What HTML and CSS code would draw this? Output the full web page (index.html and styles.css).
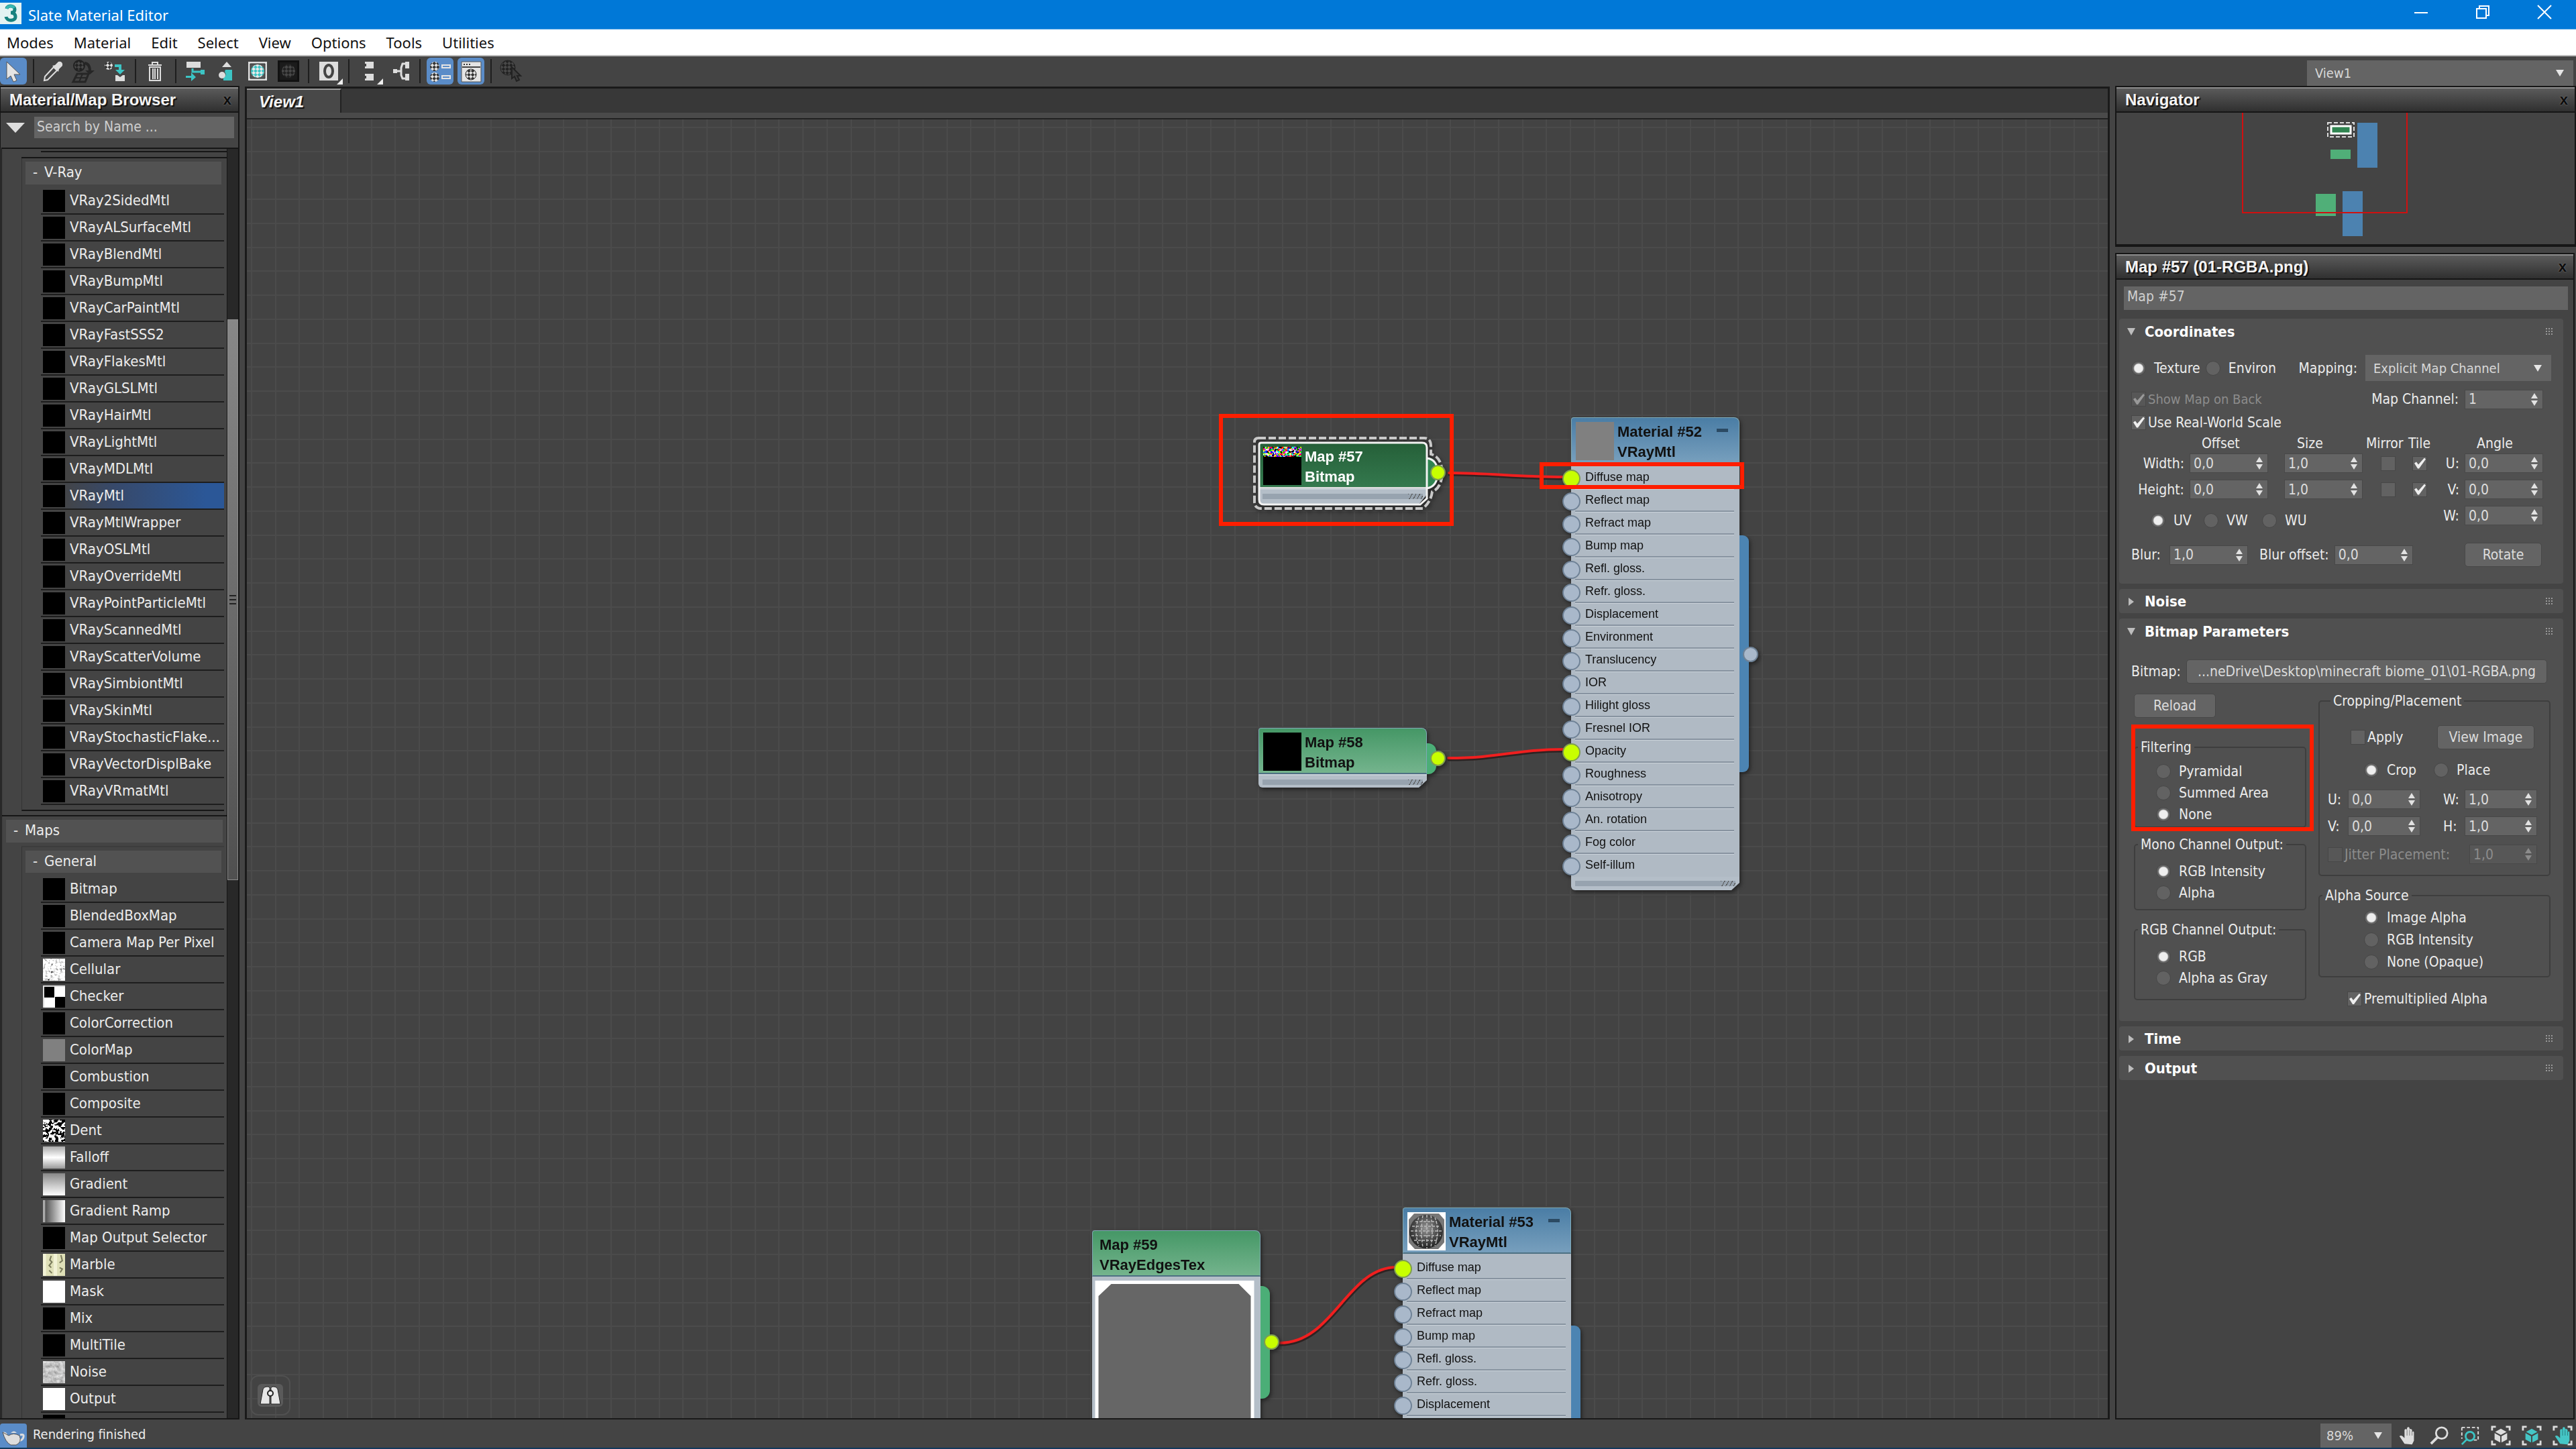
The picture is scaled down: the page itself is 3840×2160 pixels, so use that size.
FILE: index.html
```html
<!DOCTYPE html>
<html lang="en">
<head>
<meta charset="utf-8">
<title>Slate Material Editor</title>
<link rel="stylesheet" href="styles.css">
</head>
<body>
<svg class="defs" aria-hidden="true">
  <defs>
    <pattern id="chk" width="8" height="8" patternUnits="userSpaceOnUse" patternTransform="rotate(45)"><rect width="8" height="8" fill="#e0e0e0"/><rect width="4" height="4" fill="#333"/><rect x="4" y="4" width="4" height="4" fill="#333"/></pattern>
    <pattern id="chk-teal" width="8" height="8" patternUnits="userSpaceOnUse" patternTransform="rotate(45)"><rect width="8" height="8" fill="#e8e8e8"/><rect width="4" height="4" fill="#3cc4c4"/><rect x="4" y="4" width="4" height="4" fill="#3cc4c4"/></pattern>
    <pattern id="chk-dark" width="8" height="8" patternUnits="userSpaceOnUse" patternTransform="rotate(45)"><rect width="8" height="8" fill="#222"/><rect width="4" height="4" fill="#484848"/><rect x="4" y="4" width="4" height="4" fill="#484848"/></pattern>
    <filter id="n-cell" x="0" y="0" width="1" height="1"><feTurbulence type="fractalNoise" baseFrequency=".28" numOctaves="2" seed="3"/><feColorMatrix values="3 0 0 0 -.5 3 0 0 0 -.5 3 0 0 0 -.5 0 0 0 0 1"/></filter>
    <filter id="n-dent" x="0" y="0" width="1" height="1"><feTurbulence type="fractalNoise" baseFrequency=".22" numOctaves="2" seed="8"/><feColorMatrix values="14 0 0 0 -6.6 14 0 0 0 -6.6 14 0 0 0 -6.6 0 0 0 0 1"/></filter>
    <filter id="n-noise" x="0" y="0" width="1" height="1"><feTurbulence type="fractalNoise" baseFrequency=".2" numOctaves="3" seed="5"/><feColorMatrix values=".7 0 0 0 .2 .7 0 0 0 .2 .7 0 0 0 .2 0 0 0 0 1"/></filter>
    <filter id="n-rgb" x="0" y="0" width="1" height="1"><feTurbulence type="fractalNoise" baseFrequency=".3" numOctaves="2" seed="2"/><feColorMatrix values="7 0 0 0 -3.1 0 7 0 0 -3.2 0 0 7 0 -3.2 0 0 0 0 1"/></filter>
    <radialGradient id="ball" cx=".5" cy=".4" r=".6"><stop offset="0" stop-color="#999"/><stop offset=".6" stop-color="#4a4a4a"/><stop offset="1" stop-color="#222"/></radialGradient>
  </defs>
</svg>

<header class="titlebar">
  <svg class="app-icon" viewBox="0 0 32 32"><rect width="32" height="32" fill="#e4f3f2"/><path d="M10 9c1-6 12-5 12 1 0 4-3 5-6 5 4 0 7 2 7 6 0 7-13 7-14 0" fill="none" stroke="#17827f" stroke-width="5"/><path d="M10 9c1-5 9-5 11-1" fill="none" stroke="#38b8b2" stroke-width="4"/></svg>
  <h1>Slate Material Editor</h1>
  <div class="win-buttons">
    <button aria-label="Minimize"><svg viewBox="0 0 22 22"><path d="M1 12h20" stroke="#fff" stroke-width="2"/></svg></button>
    <button aria-label="Restore"><svg viewBox="0 0 22 22"><path d="M2 6h14v14H2zM6 6V2h14v14h-4" fill="none" stroke="#fff" stroke-width="2"/></svg></button>
    <button aria-label="Close"><svg viewBox="0 0 22 22"><path d="M1 1l20 20M21 1L1 21" stroke="#fff" stroke-width="2"/></svg></button>
  </div>
</header>

<nav class="menubar">
  <button>Modes</button><button>Material</button><button>Edit</button><button>Select</button><button>View</button><button>Options</button><button>Tools</button><button>Utilities</button>
</nav>

<div class="toolbar">
  <button class="tool on" aria-label="Select"><svg viewBox="0 0 40 40"><path d="M10 6v26l6-5 4 9 5-2-4-9h9z" fill="#e4e4e4" stroke="#555"/></svg></button>
  <i class="sep"></i>
  <button class="tool" aria-label="Pick material"><svg viewBox="0 0 40 40"><path d="M6 34l1-6L20 14l5 5-14 14z" fill="none" stroke="#ddd" stroke-width="2"/><path d="M18 12l4-1 5-5q3-1 5 1t1 5l-5 5-1 4z" fill="#ddd"/></svg></button>
  <button class="tool" aria-label="Put to scene"><svg viewBox="0 0 40 40"><circle cx="12" cy="12" r="8" fill="url(#chk-dark)" stroke="#222" stroke-width="2"/><path d="M20 8q8 1 8 12" fill="none" stroke="#262626" stroke-width="4"/><path d="M21 19h14l-7 6z" fill="#262626"/><path d="M9 24h17l-5 12H3z" fill="none" stroke="#262626" stroke-width="3"/><path d="M6 30h17M17 24l-5 12" stroke="#262626" stroke-width="2"/></svg></button>
  <button class="tool" aria-label="Assign material"><svg viewBox="0 0 40 40"><circle cx="10" cy="12" r="6" fill="url(#chk)"/><path d="M19 12h8v8" fill="none" stroke="#3cc4c4" stroke-width="4"/><path d="M20 18h14l-7 7z" fill="#3cc4c4"/><path d="M20 26h3l4 3 4-3h3v9H20z" fill="#ddd"/></svg></button>
  <i class="sep"></i>
  <button class="tool" aria-label="Delete"><svg viewBox="0 0 40 40"><path d="M9 11h20M15 10V7h8v3M11 14h16v20H11zM16 16v16M19 16v16M23 16v16" fill="none" stroke="#ddd" stroke-width="2"/></svg></button>
  <i class="sep"></i>
  <button class="tool" aria-label="Move children"><svg viewBox="0 0 40 40"><path d="M6 6h21v9H6z" fill="#ddd"/><path d="M15 16v5h12" fill="none" stroke="#3cc4c4" stroke-width="3"/><path d="M27 18h6v7h-6zM5 27h8v-5l7 7-7 6v-5H5z" fill="#3cc4c4"/></svg></button>
  <button class="tool" aria-label="Hide unused slots"><svg viewBox="0 0 40 40"><path d="M20 6l7 8H13z" fill="#ddd"/><path d="M18 18h10v16H15v-4q6-3 2-9z" fill="#3cc4c4"/><circle cx="13" cy="26" r="5" fill="#ddd"/></svg></button>
  <button class="tool" aria-label="Show in viewport"><svg viewBox="0 0 40 40"><path d="M6 6h28v28H6z" fill="#ddd"/><path d="M9 9h22v22H9z" fill="#555" stroke="#333"/><circle cx="20" cy="20" r="10" fill="url(#chk-teal)"/></svg></button>
  <button class="tool" aria-label="Show background"><svg viewBox="0 0 40 40"><path d="M4 4h32v32H4z" fill="#111"/><path d="M7 7h26v26H7z" fill="#1b1b1b"/><circle cx="20" cy="20" r="10" fill="url(#chk-dark)"/></svg></button>
  <i class="sep"></i>
  <button class="tool" aria-label="Material ID channel"><svg viewBox="0 0 40 40"><path d="M6 6h28v28H6z" fill="#ddd"/><ellipse cx="20" cy="20" rx="6" ry="9" fill="none" stroke="#444" stroke-width="4"/><path d="M41 31v9h-9z" fill="#eee"/></svg></button>
  <i class="sep"></i>
  <button class="tool" aria-label="Lay out all"><svg viewBox="0 0 40 40"><path d="M14 6h13v10H14v-3h2V9h-2zM14 24h13v10H14v-3h2v-4h-2z" fill="#ddd"/><path d="M41 31v9h-9z" fill="#eee"/></svg></button>
  <button class="tool" aria-label="Lay out children"><svg viewBox="0 0 40 40"><path d="M10 17h6v6h-6zM28 6h6v10h-6zM28 24h6v10h-6z" fill="#ddd"/><path d="M16 20h5M29 9h-5l-2 6v11l2 5h5" fill="none" stroke="#ddd" stroke-width="3"/></svg></button>
  <i class="sep"></i>
  <button class="tool on" aria-label="Material/Map Browser"><svg viewBox="0 0 40 40"><circle cx="12" cy="13" r="7" fill="url(#chk)"/><circle cx="12" cy="29" r="7" fill="url(#chk)"/><path d="M23 11h12v4H23zM23 27h12v4H23z" fill="none" stroke="#e4e4e4" stroke-width="2"/></svg></button>
  <button class="tool on" aria-label="Parameter Editor"><svg viewBox="0 0 40 40"><path d="M6 6h29v30H6z" fill="#e4e4e4" stroke="#555"/><path d="M7 14h27" stroke="#444" stroke-width="2"/><path d="M9 10h2M13 10h2M17 10h2" stroke="#333" stroke-width="2"/><circle cx="20" cy="25" r="8" fill="url(#chk)" stroke="#333"/></svg></button>
  <i class="sep"></i>
  <button class="tool" aria-label="Select by material"><svg viewBox="0 0 40 40"><circle cx="15" cy="15" r="11" fill="url(#chk-dark)" stroke="#222"/><path d="M21 14v17l4-3 3 7 4-2-3-6h5z" fill="#3d3d3d" stroke="#222" stroke-width="2"/></svg></button>
  <label class="combo view-combo"><select aria-label="View"><option>View1</option></select></label>
</div>

<main class="workspace">
  <aside class="panel browser">
    <div class="panel-head"><h2>Material/Map Browser</h2><button class="close" aria-label="Close browser">x</button></div>
    <div class="search"><i class="tri-down"></i><input type="text" aria-label="Search by name" value="Search by Name ..."></div>
    <div class="tree">
      <div class="tree-body">
        <div class="tail"></div>
        <section class="group">
          <h3><span>-</span>V-Ray</h3>
          <ul>
            <li><i></i>VRay2SidedMtl</li>
            <li><i></i>VRayALSurfaceMtl</li>
            <li><i></i>VRayBlendMtl</li>
            <li><i></i>VRayBumpMtl</li>
            <li><i></i>VRayCarPaintMtl</li>
            <li><i></i>VRayFastSSS2</li>
            <li><i></i>VRayFlakesMtl</li>
            <li><i></i>VRayGLSLMtl</li>
            <li><i></i>VRayHairMtl</li>
            <li><i></i>VRayLightMtl</li>
            <li><i></i>VRayMDLMtl</li>
            <li class="selected"><i></i>VRayMtl</li>
            <li><i></i>VRayMtlWrapper</li>
            <li><i></i>VRayOSLMtl</li>
            <li><i></i>VRayOverrideMtl</li>
            <li><i></i>VRayPointParticleMtl</li>
            <li><i></i>VRayScannedMtl</li>
            <li><i></i>VRayScatterVolume</li>
            <li><i></i>VRaySimbiontMtl</li>
            <li><i></i>VRaySkinMtl</li>
            <li><i></i>VRayStochasticFlake...</li>
            <li><i></i>VRayVectorDisplBake</li>
            <li><i></i>VRayVRmatMtl</li>
          </ul>
        </section>
        <section class="maps">
          <h3><span>-</span>Maps</h3>
          <section class="group">
            <h3><span>-</span>General</h3>
            <ul>
              <li><i></i>Bitmap</li>
              <li><i></i>BlendedBoxMap</li>
              <li><i></i>Camera Map Per Pixel</li>
              <li><svg viewBox="0 0 32 32"><rect width="32" height="32" filter="url(#n-cell)"/></svg>Cellular</li>
              <li><i class="t-checker"></i>Checker</li>
              <li><i></i>ColorCorrection</li>
              <li><i class="t-gray"></i>ColorMap</li>
              <li><i></i>Combustion</li>
              <li><i></i>Composite</li>
              <li><svg viewBox="0 0 32 32"><rect width="32" height="32" filter="url(#n-dent)"/></svg>Dent</li>
              <li><i class="t-falloff"></i>Falloff</li>
              <li><i class="t-gradient"></i>Gradient</li>
              <li><i class="t-ramp"></i>Gradient Ramp</li>
              <li><i></i>Map Output Selector</li>
              <li><svg viewBox="0 0 32 32"><rect width="32" height="32" fill="#dfe0b8"/><path d="M2 0v32M18 0v32" stroke="#f2f2d6" stroke-width="5"/><path d="M12 3l-2 6 3 3-4 5 3 3M26 2l2 8-4 3M24 20l4 2-3 5M9 24l4 4" fill="none" stroke="#7b7c5c" stroke-width="2"/></svg>Marble</li>
              <li><i class="t-white"></i>Mask</li>
              <li><i></i>Mix</li>
              <li><i></i>MultiTile</li>
              <li><svg viewBox="0 0 32 32"><rect width="32" height="32" filter="url(#n-noise)"/></svg>Noise</li>
              <li><i class="t-white"></i>Output</li>
              <li><i></i></li>
            </ul>
          </section>
        </section>
      </div>
      <div class="scroll"><div class="thumb"><i></i></div></div>
    </div>
  </aside>

  <section class="view">
    <div class="view-inner">
      <div class="tabs"><button class="tab">View1</button></div>
      <div class="canvas">
        <svg class="wires" aria-hidden="true">
          <g fill="none" stroke-linecap="round"><g stroke="#2e2222" stroke-width="5" transform="translate(1 2)"><path d="M1792 529C1850 529 1900 535 1964 535M1791 954C1870 954 1890 941 1964 941M1540 1826C1620 1826 1640 1713 1714 1713"/></g><g stroke="#f01f1f" stroke-width="4"><path d="M1792 529C1850 529 1900 535 1964 535M1791 954C1870 954 1890 941 1964 941M1540 1826C1620 1826 1640 1713 1714 1713"/></g></g>
        </svg>

        <article class="node map n57">
          <i class="lobe"></i>
          <header><svg class="pic" viewBox="0 0 57 57"><rect width="57" height="57"/><rect width="57" height="15" filter="url(#n-rgb)"/></svg><p>Map #57<br>Bitmap</p></header>
          <footer><i></i></footer>
          <svg class="outline" viewBox="-10 -10 292 116"><path d="M4 1H244q7 0 7 7V84l-10 9H8q-7 0-7-7V4q0-3 3-3zM251 24q16 2 16 22t-16 23" fill="none" stroke="#f2f2f2" stroke-width="3"/><path d="M0-6H247q10 0 10 12v12q16 4 17 28-1 22-15 28-2 15-14 25H3q-9-1-9-10V0q0-6 6-6z" fill="none" stroke="#c8c8c8" stroke-width="4" stroke-dasharray="11 4"/></svg>
          <b class="port out lit"></b>
        </article>

        <article class="node map n58">
          <i class="lobe"></i>
          <header><svg class="pic" viewBox="0 0 57 57"><rect width="57" height="57"/></svg><p>Map #58<br>Bitmap</p></header>
          <footer><i></i></footer>
          <b class="port out lit"></b>
        </article>

        <article class="node map n59">
          <i class="lobe"></i>
          <header><p>Map #59<br>VRayEdgesTex</p></header>
          <div class="preview"><svg viewBox="0 0 237 260"><rect width="237" height="260" fill="#fff"/><path d="M24 5h190l18 18v237H5V23z" fill="#666"/></svg></div>
          <b class="port out lit"></b>
        </article>

        <article class="node mtl n52">
          <i class="lobe"></i>
          <header><svg class="pic" viewBox="0 0 57 57"><rect width="57" height="57" fill="#808080"/></svg><p>Material #52<br>VRayMtl</p><button aria-label="Collapse Material #52"></button></header>
          <ul>
            <li class="lit">Diffuse map</li><li>Reflect map</li><li>Refract map</li><li>Bump map</li><li>Refl. gloss.</li><li>Refr. gloss.</li><li>Displacement</li><li>Environment</li><li>Translucency</li><li>IOR</li><li>Hilight gloss</li><li>Fresnel IOR</li><li class="lit">Opacity</li><li>Roughness</li><li>Anisotropy</li><li>An. rotation</li><li>Fog color</li><li>Self-illum</li>
          </ul>
          <footer><i></i></footer>
          <b class="port out"></b>
        </article>

        <article class="node mtl n53">
          <i class="lobe"></i>
          <header><svg class="pic" viewBox="0 0 57 57"><rect width="57" height="57" fill="#fff"/><path d="M10 2h37l8 9v34l-9 10H11L2 45V11z" fill="#777"/><circle cx="28" cy="29" r="25" fill="url(#ball)"/><path d="M12 14h32M7 21h42M5 28h46M6 35h44M10 42h36M17 8q-8 20 0 42M23 5q-4 24 0 47M29 4v50M35 5q4 24 0 47M41 8q8 20 0 42" fill="none" stroke="#bbb" stroke-width="1.5" stroke-dasharray="4 2"/></svg><p>Material #53<br>VRayMtl</p><button aria-label="Collapse Material #53"></button></header>
          <ul>
            <li class="lit">Diffuse map</li><li>Reflect map</li><li>Refract map</li><li>Bump map</li><li>Refl. gloss.</li><li>Refr. gloss.</li><li>Displacement</li><li></li>
          </ul>
        </article>

        <div class="mark mark-map"></div>
        <div class="mark mark-diffuse"></div>
        <button class="find" aria-label="Find"><svg viewBox="0 0 38 34"><rect width="38" height="34" rx="6" fill="#5a5a5a"/><path d="M4 30l4-22q1-4 6-4t4 4v22zM34 30L30 8q-1-4-6-4t-4 4v22z" fill="#e6e6e6" stroke="#222"/><circle cx="19" cy="14" r="4" fill="#eee" stroke="#222" stroke-width="2"/></svg></button>
      </div>
    </div>
  </section>

  <aside class="side">
    <section class="panel">
      <div class="panel-head"><h2>Navigator</h2><button class="close" aria-label="Close navigator">x</button></div>
      <div class="navmap">
        <svg viewBox="0 0 683 196" preserveAspectRatio="xMinYMin"><g fill="#50af78"><path d="M319 55h30v14h-30zM297 121h30v33h-30z"/></g><g fill="#4c82b0"><path d="M359 15h30v67h-30zM337 117h30v67h-30z"/></g><path d="M320 20h29v11h-29z" fill="#2f8450" stroke="#fff" stroke-width="3"/><path d="M315 15h39v21h-39z" fill="none" stroke="#ddd" stroke-width="2" stroke-dasharray="6 3"/><path d="M188 0v149h245V0" fill="none" stroke="#d01010" stroke-width="2"/></svg>
      </div>
    </section>

    <section class="panel params">
      <div class="panel-head"><h2>Map #57 (01-RGBA.png)</h2><button class="close" aria-label="Close parameters">x</button></div>
      <div class="params-body">
        <input class="name" type="text" aria-label="Map name" value="Map #57">
        <div class="rollouts">

          <section class="rollout open">
            <h3><i class="tri"></i>Coordinates<i class="grip"></i></h3>
            <div class="coord">
              <div class="r1">
                <label><input type="radio" name="tex" checked>Texture</label>
                <label><input type="radio" name="tex">Environ</label>
                <label for="mapping">Mapping:</label>
                <span class="combo"><select id="mapping"><option>Explicit Map Channel</option></select></span>
              </div>
              <div class="r2">
                <label class="off"><input type="checkbox" checked disabled>Show Map on Back</label>
                <label for="chan">Map Channel:</label><span class="spin"><input id="chan" type="text" value="1"></span>
              </div>
              <div class="r3"><label><input type="checkbox" checked>Use Real-World Scale</label></div>
              <div class="uv">
                <span class="h-off">Offset</span><span class="h-size">Size</span><span class="h-mir">Mirror</span><span class="h-tile">Tile</span><span class="h-ang">Angle</span>
                <label class="lab" for="wo">Width:</label><span class="spin"><input id="wo" type="text" value="0,0"></span><span class="spin"><input aria-label="Width size" type="text" value="1,0"></span><input type="checkbox" aria-label="Mirror width"><input type="checkbox" aria-label="Tile width" checked><label class="lab" for="au">U:</label><span class="spin"><input id="au" type="text" value="0,0"></span>
                <label class="lab" for="ho">Height:</label><span class="spin"><input id="ho" type="text" value="0,0"></span><span class="spin"><input aria-label="Height size" type="text" value="1,0"></span><input type="checkbox" aria-label="Mirror height"><input type="checkbox" aria-label="Tile height" checked><label class="lab" for="av">V:</label><span class="spin"><input id="av" type="text" value="0,0"></span>
                <div class="axes"><label><input type="radio" name="axis" checked>UV</label><label><input type="radio" name="axis">VW</label><label><input type="radio" name="axis">WU</label></div><label class="lab" for="aw">W:</label><span class="spin"><input id="aw" type="text" value="0,0"></span>
              </div>
              <div class="r5">
                <label for="blur">Blur:</label><span class="spin"><input id="blur" type="text" value="1,0"></span>
                <label for="blo">Blur offset:</label><span class="spin"><input id="blo" type="text" value="0,0"></span>
                <button class="btn">Rotate</button>
              </div>
            </div>
          </section>

          <section class="rollout"><h3><i class="tri"></i>Noise<i class="grip"></i></h3></section>

          <section class="rollout open">
            <h3><i class="tri"></i>Bitmap Parameters<i class="grip"></i></h3>
            <div class="bitmap-row"><span>Bitmap:</span><button class="btn">...neDrive\Desktop\minecraft biome_01\01-RGBA.png</button></div>
            <div class="cols">
              <div class="col-l">
                <button class="btn reload">Reload</button>
                <fieldset class="filtering"><legend>Filtering</legend>
                  <label><input type="radio" name="filt">Pyramidal</label>
                  <label><input type="radio" name="filt">Summed Area</label>
                  <label><input type="radio" name="filt" checked>None</label>
                  <div class="mark mark-filter"></div>
                </fieldset>
                <fieldset class="mono"><legend>Mono Channel Output:</legend>
                  <label><input type="radio" name="mono" checked>RGB Intensity</label>
                  <label><input type="radio" name="mono">Alpha</label>
                </fieldset>
                <fieldset class="rgb"><legend>RGB Channel Output:</legend>
                  <label><input type="radio" name="rgb" checked>RGB</label>
                  <label><input type="radio" name="rgb">Alpha as Gray</label>
                </fieldset>
              </div>
              <div class="col-r">
                <fieldset class="crop"><legend>Cropping/Placement</legend>
                  <div class="c1"><label><input type="checkbox">Apply</label><button class="btn">View Image</button></div>
                  <div class="c2"><label><input type="radio" name="crop" checked>Crop</label><label><input type="radio" name="crop">Place</label></div>
                  <div class="c3">
                    <label for="cu">U:</label><span class="spin"><input id="cu" type="text" value="0,0"></span><label for="cw">W:</label><span class="spin"><input id="cw" type="text" value="1,0"></span>
                    <label for="cv">V:</label><span class="spin"><input id="cv" type="text" value="0,0"></span><label for="ch">H:</label><span class="spin"><input id="ch" type="text" value="1,0"></span>
                  </div>
                  <div class="c4 off"><label><input type="checkbox" disabled>Jitter Placement:</label><span class="spin"><input type="text" aria-label="Jitter placement" value="1,0" disabled></span></div>
                </fieldset>
                <fieldset class="alpha"><legend>Alpha Source</legend>
                  <label><input type="radio" name="alpha" checked>Image Alpha</label>
                  <label><input type="radio" name="alpha">RGB Intensity</label>
                  <label><input type="radio" name="alpha">None (Opaque)</label>
                </fieldset>
                <label class="premult"><input type="checkbox" checked>Premultiplied Alpha</label>
              </div>
            </div>
          </section>

          <section class="rollout"><h3><i class="tri"></i>Time<i class="grip"></i></h3></section>
          <section class="rollout"><h3><i class="tri"></i>Output<i class="grip"></i></h3></section>
        </div>
      </div>
    </section>
  </aside>
</main>

<footer class="status">
  <button class="teapot" aria-label="Render"><svg viewBox="0 0 40 36"><path d="M10 18q-1-4-5-4M30 17q6-2 5 3t-7 6" fill="none" stroke="#ddd" stroke-width="3"/><path d="M4 13l9 5q7-5 16 0 4 10-5 14H16Q8 28 4 13z" fill="#ddd" stroke="#555"/><path d="M16 14q5-5 9 0z" fill="#ddd"/></svg></button>
  <span class="msg">Rendering finished</span>
  <label class="combo zoom"><select aria-label="Zoom"><option>89%</option></select></label>
  <div class="nav-tools">
    <button aria-label="Pan"><svg viewBox="0 0 32 32"><path d="M10 29L2 17q2-2 5 0l3 3V7q2-3 4 0V4q2-3 4 0v2q2-2 4 1v3q3-2 3 1v13l-3 6z" fill="#ddd"/><path d="M14 7v9M18 7v9M22 9v7" stroke="#777"/></svg></button>
    <button aria-label="Zoom"><svg viewBox="0 0 32 32"><circle cx="20" cy="12" r="9" fill="none" stroke="#ddd" stroke-width="3"/><path d="M13 19L3 29" stroke="#ddd" stroke-width="4"/></svg></button>
    <button aria-label="Zoom region"><svg viewBox="0 0 32 32"><path d="M3 3h26v20H19M3 3v18" fill="none" stroke="#ddd" stroke-width="2" stroke-dasharray="5 3"/><circle cx="16" cy="17" r="7" fill="#444" stroke="#3cc4c4" stroke-width="3"/><path d="M11 22l-8 8" stroke="#3cc4c4" stroke-width="3"/></svg></button>
    <button aria-label="Zoom extents"><svg viewBox="0 0 32 32"><path d="M2 8V2h6M24 2h6v6M30 24v6h-6M8 30H2v-6" fill="none" stroke="#ddd" stroke-width="3"/><path d="M16 5l9 5-9 5-9-5zM6 12l9 5v10l-9-5zM26 12l-9 5v10l9-5z" fill="#ddd"/></svg></button>
    <button aria-label="Zoom extents selected"><svg viewBox="0 0 32 32"><path d="M2 8V2h6M24 2h6v6M30 24v6h-6M8 30H2v-6" fill="none" stroke="#ddd" stroke-width="3"/><path d="M16 5l9 5-9 5-9-5zM6 12l9 5v10l-9-5zM26 12l-9 5v10l9-5z" fill="#45c6c6"/></svg></button>
    <button aria-label="Pan to selected"><svg viewBox="0 0 32 32"><path d="M2 8V2h6M24 2h6v6M30 24v6h-6M8 30H2v-6" fill="none" stroke="#ddd" stroke-width="3"/><path d="M12 29L4 17q2-2 5 0l3 3V7q2-3 4 0V4q2-3 4 0v2q2-2 4 1v3q3-2 3 1v13l-3 6z" fill="#45c6c6"/><path d="M16 7v9M20 7v9M24 9v7" stroke="#2a7c7c"/></svg></button>
  </div>
</footer>
</body>
</html>
```
FILE: styles.css
```css
* { box-sizing: border-box; }
html, body { height: 100%; margin: 0; }
body {
  display: flex; flex-direction: column; overflow: hidden;
  background: #444; color: #ececec;
  font: 21px/24px "DejaVu Sans Condensed", "DejaVu Sans", sans-serif;
}
h1, h2, h3, p, ul, fieldset { margin: 0; padding: 0; }
ul { list-style: none; }
button, input, select { font: inherit; color: inherit; margin: 0; padding: 0; border: 0; background: none; border-radius: 0; }
button { white-space: nowrap; }
svg { display: block; }
.defs { position: absolute; width: 0; height: 0; }

/* title bar and menus */
.titlebar { flex: none; height: 44px; display: flex; align-items: center; background: #0078d7; color: #fff; border-bottom: 1px solid #5aa8e6; }
.app-icon { width: 32px; height: 32px; margin-bottom: 4px; }
.titlebar h1 { margin-left: 10px; font: 22px/28px "Noto Sans", sans-serif; }
.win-buttons { margin-left: auto; display: flex; gap: 70px; padding-right: 36px; margin-bottom: 7px; }
.win-buttons svg { width: 22px; height: 22px; }
.menubar { flex: none; height: 40px; display: flex; gap: 30px; padding-left: 10px; background: #fff; color: #111; border-bottom: 2px solid #bbb; font: 22px/36px "Noto Sans", sans-serif; }

/* toolbar */
.toolbar { flex: none; height: 44px; display: flex; align-items: center; gap: 6px; padding-right: 4px; background: #444; }
.tool { flex: none; width: 40px; height: 40px; border-radius: 6px; }
.tool svg { width: 40px; height: 40px; overflow: visible; }
.tool.on { background: #5a8cc8; }
.sep { width: 2px; height: 36px; margin: 0 3px; background: #1e1e1e; }
.combo { position: relative; display: block; background: #646464; font-size: 20px; }
.combo::after { content: ""; position: absolute; right: 14px; top: 50%; margin-top: -5px; border: 6px solid transparent; border-top: 10px solid #e6e6e6; border-bottom: 0; pointer-events: none; }
.combo select { appearance: none; width: 100%; height: 100%; padding: 0 12px; color: #d8d8d8; }
.view-combo { margin-left: auto; width: 397px; height: 38px; align-self: flex-end; }

/* workspace */
.workspace { flex: 1; min-height: 0; display: grid; grid-template-columns: 357px minmax(0, 1fr) 687px; grid-template-rows: minmax(0, 1fr); }
.panel { border: 2px solid #161616; }
.panel-head { height: 38px; display: flex; align-items: center; justify-content: space-between; padding: 0 10px 1px 13px; background: linear-gradient(#5a5a5a, #303030); border-top: 2px solid #8c8c8c; border-bottom: 2px solid #161616; }
.panel-head h2, .tab { font: bold 24px/30px "Liberation Sans", sans-serif; color: #f4f4f4; text-shadow: 2px 2px 1px #111; }
.close { font: bold 22px/24px "Liberation Sans", sans-serif; color: #0c0c0c; text-shadow: 0 0 2px #888; }

/* material browser */
.browser { display: flex; flex-direction: column; border-left-width: 1px; border-right-width: 2px; }
.search { display: flex; align-items: center; gap: 14px; height: 32px; margin: 6px 6px 14px 8px; }
.tri-down { border: 14px solid transparent; border-top: 15px solid #ddd; border-bottom: 0; }
.search input { flex: 1; min-width: 0; height: 32px; padding: 0 4px 2px; background: #646464; color: #cfcfcf; }
.tree { flex: 1; min-height: 0; display: flex; margin-left: 1px; border-top: 2px solid #161616; border-left: 1px solid #161616; }
.tree-body { flex: 1; min-width: 0; overflow: hidden; font-size: 22px; }
.tail { margin-left: 29px; height: 14px; border-bottom: 2px solid #161616; background: linear-gradient(#161616, #161616) 29px 3px / 100% 2px no-repeat; }
.group { margin: 0 4px 0 29px; border-left: 1px solid #333; border-bottom: 2px solid #161616; padding: 5px 0 7px; }
.tree h3 { display: flex; height: 34px; margin: 0 4px 0 5px; padding-left: 11px; background: #525252; font-size: 22px; font-weight: normal; line-height: 32px; }
.tree h3 span { width: 17px; }
.group ul { margin: 5px 0 0 28px; }
.group li { display: flex; align-items: center; height: 40px; padding: 0 0 0 3px; border-bottom: 2px solid #1d1d1d; gap: 7px; line-height: 36px; white-space: nowrap; }
.group li i, .group li svg { flex: none; width: 33px; height: 33px; background: #000; }
.group li.selected { background: linear-gradient(90deg, #444 10%, #37496a 40%, #2b5797 90%); }
.maps { margin-top: 6px; border-top: 2px solid #161616; padding-top: 5px; }
.maps > h3 { margin: 0 6px 5px 6px; }
.maps .group { border-top: 2px solid #3c3c3c; }
.maps .group > h3 { height: 33px; }
.group .t-gray { background: #808080; }
.group .t-white { background: #fff; }
.group .t-checker { background: conic-gradient(#fff 25%, #000 0 50%, #fff 0 75%, #000 0); border: 2px solid #ddd; border-width: 2px 0 0 2px; }
.group .t-falloff { background: linear-gradient(#aaa, #fff 50%, #999); }
.group .t-gradient { background: linear-gradient(#888, #fff); }
.group .t-ramp { background: linear-gradient(90deg, #aaa 8%, #555 12%, #fff); }
.scroll { width: 17px; background: #282828; border-left: 1px solid #161616; }
.thumb { height: 836px; margin-top: 254px; display: flex; align-items: center; justify-content: center; background: linear-gradient(#888, #505050); border: 1px solid #8c8c8c; }
.thumb i { width: 10px; height: 14px; background: repeating-linear-gradient(#222 0 2px, transparent 2px 6px); }

/* node view */
.view { padding: 1px 8px 0; min-width: 0; }
.view-inner { height: 100%; display: flex; flex-direction: column; border: 3px solid #1a1a1a; border-bottom-width: 2px; }
.tabs { flex: none; height: 36px; background: #383838; }
.tab { width: 141px; height: 38px; padding-left: 18px; text-align: left; font-style: italic; background: #484848; border-top: 2px solid #999; border-right: 2px solid #222; vertical-align: top; }
.canvas {
  position: relative; flex: 1; min-height: 0; overflow: hidden; border-top: 8px solid #4a4a4a;
  background-color: #434343;
  background-image:
    linear-gradient(90deg, #4b4b4b 2px, transparent 2px 36px, #4b4b4b 36px 38px, transparent 38px 71px, #4b4b4b 71px 73px, transparent 73px 107px, #4b4b4b 107px 109px, transparent 109px),
    linear-gradient(#4b4b4b 2px, transparent 2px 36px, #4b4b4b 36px 38px, transparent 38px 71px, #4b4b4b 71px 73px, transparent 73px 107px, #4b4b4b 107px 109px, transparent 109px);
  background-size: 143px 143px; background-position: 6px 13px;
  box-shadow: inset 0 2px #222;
}
.wires { position: absolute; left: 0; top: 0; width: 100%; height: 100%; }
.node { position: absolute; width: 251px; color: #111; filter: drop-shadow(2px 3px 3px #222); }
.n57 { left: 1508px; top: 483px; }
.n58 { left: 1508px; top: 909px; }
.n59 { left: 1260px; top: 1658px; }
.n52 { left: 1974px; top: 446px; }
.n53 { left: 1723px; top: 1624px; }
.node header { position: relative; display: flex; height: 69px; padding: 6px 0 0 6px; gap: 5px; border: 1px solid #7fa9b5; border-bottom: 2px solid #4d7183; border-radius: 4px 8px 0 0; }
.map header { background: linear-gradient(#459766, #74b48d); }
.mtl header { background: linear-gradient(#4a7da5, #779fbd); }
.n57 header { background: linear-gradient(#255f38, #34794e); color: #fff; border-color: #ddd; }
.pic { width: 57px; height: 57px; }
.node p { font: bold 22px/30px "Liberation Sans", sans-serif; }
.n59 p { padding-left: 4px; }
.node header button { position: absolute; right: 16px; top: 16px; width: 17px; height: 5px; background: #2b4a63; }
.node ul { padding-top: 4px; background: #b0bac4; }
.node li { position: relative; height: 34px; margin: 0 8px 0 6px; padding-left: 15px; border-bottom: 2px solid #8793a0; box-shadow: 0 1px #cbd3da; font: 18px/32px "Liberation Sans", sans-serif; }
.node li:last-child { border-bottom-color: transparent; box-shadow: none; }
.node li::before { content: ""; position: absolute; left: -19px; top: 5px; }
.node li::before, .port { width: 23px; height: 23px; border-radius: 50%; background: #a9b8ca; border: 2px solid #6f8296; }
.node li.lit::before, .port.lit { background: #c8ff00; border-color: #7f9d50; }
.port { position: absolute; left: 256px; }
.node footer { height: 20px; padding: 6px 6px 0; background: #b4bec8; border-radius: 0 0 0 6px; clip-path: polygon(0 0, 100% 0, 100% 9px, 239px 100%, 0 100%); }
.node footer i { display: block; height: 8px; background: repeating-linear-gradient(120deg, #555 0 1px, transparent 1px 5px) right / 22px 8px no-repeat, #97a3af; }
.map footer { border-top: 2px solid #c6ced6; }
.n57 footer { height: 24px; }
.lobe { position: absolute; z-index: -1; left: 250px; width: 15px; border-radius: 0 12px 12px 0; }
.map .lobe { background: #4bae77; top: 23px; height: 46px; }
.n57 .lobe { background: #2f8450; }
.n57 .port, .n58 .port { top: 34px; }
.n59 .lobe { top: 83px; height: 168px; }
.n59 .port { top: 155px; }
.mtl .lobe { background: #4c84b2; top: 176px; height: 353px; border-radius: 0 9px 9px 0; }
.n52 .port { top: 342px; }
.outline { position: absolute; left: -10px; top: -10px; width: 292px; height: 116px; }
.preview { padding: 6px 8px 0 4px; background: #b4bec8; }
.preview svg { width: 238px; height: 260px; }
.mark { position: absolute; border: 6px solid #ff1e00; pointer-events: none; }
.mark-map { left: 1449px; top: 441px; width: 350px; height: 167px; }
.mark-diffuse { left: 1927px; top: 513px; width: 305px; height: 40px; }
.find { position: absolute; left: 5px; bottom: 4px; width: 60px; height: 60px; border: 2px solid #505050; border-radius: 12px; padding: 10px 9px; }
.find svg { width: 38px; height: 36px; }

/* right side */
.side { display: flex; flex-direction: column; gap: 9px; min-height: 0; }
.navmap { height: 198px; overflow: hidden; border-bottom: 2px solid #161616; }
.navmap svg { width: 683px; height: 196px; }
.params { flex: 1; min-height: 0; margin-right: 2px; }
.params-body { padding: 10px 8px 0 4px; }
.name { display: block; width: calc(100% - 7px); height: 35px; margin: 0 0 13px 7px; padding: 0 5px 6px; background: #646464; color: #d0d0d0; }
.rollouts { display: flex; flex-direction: column; gap: 8px; margin-right: 7px; }
.rollout { height: 36px; background: #505050; border-radius: 4px; }
.rollout.open { height: auto; padding-bottom: 25px; }
.rollout h3 { display: flex; align-items: center; height: 36px; padding: 2px 14px 0 12px; font-size: 22px; color: #fff; }
.rollout.open h3 { height: 42px; padding: 0 14px 2px 12px; }
.tri { width: 26px; height: 12px; background: #bdbdbd; clip-path: polygon(2px 0, 10px 6px, 2px 12px); }
.open .tri { clip-path: polygon(0 0, 12px 0, 6px 11px); }
.grip { margin-left: auto; width: 12px; height: 12px; background: repeating-linear-gradient(90deg, transparent 0 2px, #505050 2px 4px), repeating-linear-gradient(#999 0 2px, #505050 2px 4px); }
label { display: flex; align-items: center; white-space: nowrap; }
input[type=radio], input[type=checkbox] { appearance: none; flex: none; width: 22px; height: 22px; background: #626262; border: 1px solid #474747; }
input[type=radio] { border-radius: 50%; margin-right: 12px; }
input[type=radio]:checked { background: radial-gradient(#eee 0 6px, #626262 8px); }
input[type=checkbox]:checked::after { content: ""; display: block; width: 20px; height: 20px; background: #eee; clip-path: polygon(2px 10px, 5px 8px, 8px 12px, 17px 2px, 19px 4px, 9px 18px, 7px 18px); }
label input[type=checkbox] { margin-right: 3px; }
.off { color: #8c8c8c; }
.off input[type=checkbox] { background: #575757; }
.off input[type=checkbox]::after { background: #999; }
.spin { position: relative; display: block; width: 117px; height: 29px; background: #646464; border: 1px solid #484848; }
.spin input { display: block; width: 80%; height: 100%; padding-left: 5px; color: #dcdcdc; }
.spin::before, .spin::after { content: ""; position: absolute; right: 7px; border: 5px solid transparent; }
.spin::before { top: 4px; border-top: 0; border-bottom: 8px solid #e2e2e2; }
.spin::after { bottom: 4px; border-bottom: 0; border-top: 8px solid #e2e2e2; }
.off .spin { background: #575757; }
.off .spin input { color: #8c8c8c; }
.off .spin::before { border-bottom-color: #8c8c8c; }
.off .spin::after { border-top-color: #8c8c8c; }
.btn { height: 36px; background: #646464; border: 1px solid #474747; border-radius: 5px; color: #dcdcdc; }

.coord { padding: 12px 18px 0; }
.r1, .r2, .r5 { display: flex; align-items: center; }
.r1 { height: 39px; }
.r1 label:nth-child(2) { margin-left: 8px; }
.r1 label:nth-child(3) { margin-left: auto; margin-right: 12px; }
.r1 .combo { width: 277px; height: 39px; }
.r2 { height: 28px; margin-top: 13px; padding-right: 12px; }
.r2 .off { font-size: 20px; }
.r2 label:nth-child(2) { margin-left: auto; margin-right: 9px; }
.r3 { height: 41px; display: flex; }
.uv { display: grid; grid-template-columns: 87px 141px 144px 47px 40px 38px 117px; grid-template-rows: 21px 39px 39px 39px; align-items: center; }
.uv .h-off { grid-column: 2; padding-left: 18px; }
.h-size { padding-left: 19px; }
.h-mir { margin-left: -22px; }
.h-tile { margin-left: -6px; }
.h-ang { grid-column: 7; padding-left: 18px; }
.uv .lab { justify-content: flex-end; padding-right: 8px; }
.axes { grid-column: 1 / 6; align-self: end; display: flex; padding-left: 29px; }
.axes label { width: 79px; }
.axes label:nth-child(2) { width: 87px; }
.r5 { height: 36px; margin-top: 21px; padding-right: 14px; }
.r5 .spin { margin: 0 17px 0 13px; }
.r5 label:nth-of-type(2) + .spin { margin-left: 8px; }
.r5 .btn { width: 115px; margin-left: auto; }

.bitmap-row { display: flex; align-items: center; gap: 8px; margin: 19px 24px 0 18px; }
.bitmap-row .btn { flex: 1; }
.cols { display: flex; gap: 18px; margin: 15px 19px 0 22px; }
.col-l { width: 257px; }
.col-r { flex: 1; margin-top: -1px; }
.reload { display: block; width: 122px; }
fieldset { position: relative; border: 2px solid #3e3e3e; border-radius: 5px; min-width: 0; }
legend { margin-left: 4px; padding: 0 4px; height: 24px; }
fieldset > label { height: 32px; padding-left: 31px; }
.filtering { margin-top: 32px; padding: 8px 0 2px; }
.mono { margin-top: 13px; padding: 12px 0 8px; }
.rgb { margin-top: 17px; padding: 12px 0 15px; }
.mark-filter { left: -6px; top: -46px; width: 272px; height: 159px; }
.crop { padding: 24px 18px 16px 12px; }
.c1, .c2, .c4 { display: flex; align-items: center; justify-content: space-between; }
.c1 { padding-left: 34px; padding-right: 4px; }
.c1 .btn { width: 145px; }
.c2 { height: 32px; margin: 15px 0 13px; padding-left: 54px; justify-content: flex-start; gap: 26px; }
.c3 { display: grid; grid-template-columns: 30px 1fr 32px 108px; row-gap: 11px; }
.c3 .spin { width: 108px; }
.c4 { margin-top: 13px; }
.c4 .spin { width: 101px; }
.alpha { margin-top: 17px; padding: 4px 0 5px; }
.alpha > label { height: 33px; padding-left: 66px; }
.premult { height: 32px; margin: 16px 0 -8px 43px; }

/* status bar */
.status { flex: none; height: 44px; display: flex; align-items: center; border-bottom: 2px solid #12395c; font-size: 20px; }
.teapot { width: 40px; height: 36px; background: #5a8cc8; border-radius: 4px 4px 0 0; align-self: flex-end; }
.teapot svg { width: 40px; height: 36px; }
.msg { margin: 2px 0 0 9px; }
.zoom { width: 106px; height: 36px; margin-left: auto; align-self: flex-end; }
.zoom select { padding: 0 9px; }
.nav-tools { display: flex; gap: 16px; margin: 6px 5px 0 10px; }
.nav-tools button { width: 30px; height: 30px; }
.nav-tools svg { width: 30px; height: 30px; }
```
